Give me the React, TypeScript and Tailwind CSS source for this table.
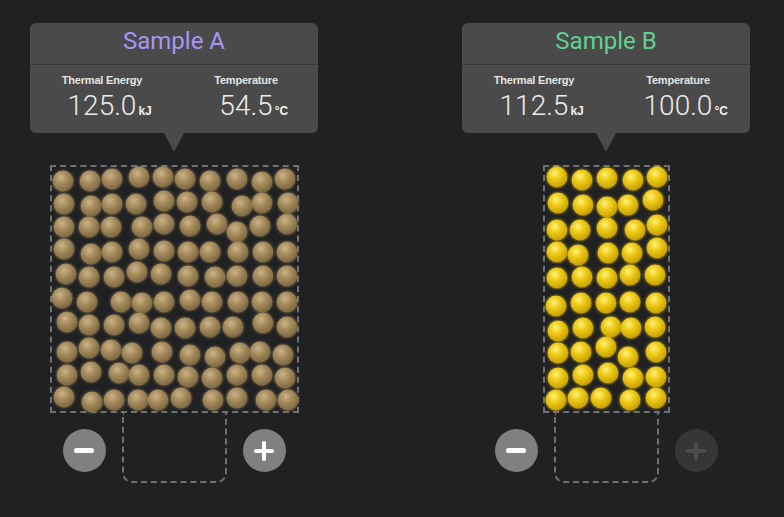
import React from "react";

type P = [number, number];

const brown: P[] = [
  [62,181],[89,181],[111,179],[138,177],[162,177],[184,179],[209,181],[236,179],[261,182],[284,179],
  [63,204],[90,206],[111,204],[135,204],[163,201],[186,202],[211,202],[241,206],[261,203],[287,203],
  [63,227],[88,227],[110,227],[141,227],[163,224],[189,226],[216,224],[236,232],[259,226],[286,224],
  [63,249],[90,254],[111,252],[138,249],[163,251],[187,252],[209,252],[237,252],[262,252],[286,252],
  [65,274],[88,277],[113,277],[136,272],[160,274],[187,276],[214,277],[236,276],[262,276],[286,276],
  [61,298],[86,302],[120,302],[141,303],[163,302],[189,300],[211,302],[237,302],[261,302],[286,302],
  [66,322],[88,325],[113,325],[138,323],[160,328],[184,328],[209,327],[232,327],[262,323],[286,327],
  [66,352],[88,348],[110,350],[131,353],[161,352],[189,355],[214,357],[239,353],[259,352],[282,355],
  [66,375],[90,372],[118,373],[138,375],[163,375],[187,377],[211,378],[236,375],[261,375],[284,378],
  [63,397],[91,402],[113,400],[137,400],[157,400],[180,398],[212,400],[236,398],[265,400],[287,400],
];

const yellow: P[] = [
  [557,177],[582,180],[607,178],[633,180],[657,177],
  [558,203],[583,205],[607,207],[628,205],[653,200],
  [557,230],[580,230],[607,228],[635,230],[657,225],
  [557,252],[578,255],[608,253],[632,253],[657,248],
  [557,278],[582,277],[607,278],[630,275],[655,275],
  [556,306],[581,303],[606,303],[630,302],[656,303],
  [558,331],[583,328],[611,327],[631,328],[655,327],
  [558,353],[581,352],[606,347],[628,357],[656,352],
  [558,378],[583,375],[608,373],[633,378],[656,377],
  [556,400],[578,398],[601,398],[630,400],[656,398],
];

function Particles({
  pts, ox, oy, w, h, kind,
}: { pts: P[]; ox: number; oy: number; w: number; h: number; kind: "brown" | "yellow" }) {
  const id = `grad-${kind}`;
  const halo = kind === "brown" ? "#9a8458" : "#e0bc10";
  return (
    <svg width={w} height={h} className="block overflow-visible">
      <defs>
        {kind === "brown" ? (
          <radialGradient id={id} cx="40%" cy="33%" r="68%">
            <stop offset="0%" stopColor="#cbb389" />
            <stop offset="45%" stopColor="#a68c5d" />
            <stop offset="100%" stopColor="#7d6742" />
          </radialGradient>
        ) : (
          <radialGradient id={id} cx="40%" cy="33%" r="68%">
            <stop offset="0%" stopColor="#fff27e" />
            <stop offset="40%" stopColor="#f0cd1c" />
            <stop offset="100%" stopColor="#c69f00" />
          </radialGradient>
        )}
        <filter id={`soft-${kind}`} x="-20%" y="-20%" width="140%" height="140%">
          <feGaussianBlur stdDeviation="1.2" />
        </filter>
      </defs>
      {pts.map(([x, y], i) => (
        <circle key={`h${i}`} cx={x - ox} cy={y - oy} r={11.2} fill={halo} opacity={0.45} filter={`url(#soft-${kind})`} />
      ))}
      {pts.map(([x, y], i) => (
        <circle key={i} cx={x - ox} cy={y - oy} r={10.4} fill={`url(#${id})`} />
      ))}
    </svg>
  );
}

function MinusBtn() {
  return (
    <div className="w-[43px] h-[43px] rounded-full bg-[#808080] flex items-center justify-center mt-[16px]">
      <div className="w-[20px] h-[5px] rounded-full bg-white" />
    </div>
  );
}

function PlusBtn({ disabled }: { disabled?: boolean }) {
  const bar = disabled ? "bg-[#4a4b4d]" : "bg-white";
  return (
    <div
      className={`w-[43px] h-[43px] rounded-full flex items-center justify-center mt-[16px] relative ${
        disabled ? "bg-[#353638]" : "bg-[#808080]"
      }`}
    >
      <div className={`absolute w-[20px] h-[4px] rounded-full ${bar}`} />
      <div className={`absolute w-[4px] h-[20px] rounded-full ${bar}`} />
    </div>
  );
}

function Stat({ label, value, unit }: { label: string; value: string; unit: string }) {
  return (
    <div className="flex flex-col items-center">
      <div className="text-[11px] leading-[13px] font-bold text-[#e4e4e4] tracking-[-0.2px] font-['Liberation_Sans',sans-serif]">
        {label}
      </div>
      <div className="mt-[3px] relative inline-block text-[28px] leading-[32px] font-light text-[#ececec] font-['Roboto',sans-serif]">
        {value}
        <span className="absolute left-full top-[15px] ml-[2px] text-[12px] leading-[12px] font-bold text-[#f2f2f2] font-['Liberation_Sans',sans-serif]">
          {unit}
        </span>
      </div>
    </div>
  );
}

function Column({
  title, titleColor, energy, temp, boxW, pts, ox, plusDisabled, kind,
}: {
  title: string; titleColor: string; energy: string; temp: string; boxW: string;
  pts: P[]; ox: number; plusDisabled?: boolean; kind: "brown" | "yellow";
}) {
  const innerW = kind === "brown" ? 245 : 123;
  return (
    <div className="w-[288px] flex flex-col items-center">
      <div className="w-full h-[110px] rounded-[6px] bg-[#4a4a4a]">
        <div className="h-[42px] border-b border-[#373737] flex justify-center pt-[4px]">
          <div className={`text-[24px] leading-[28px] font-normal font-['Roboto',sans-serif] ${titleColor}`}>{title}</div>
        </div>
        <div className="grid grid-cols-2 pt-[9px]">
          <Stat label="Thermal Energy" value={energy} unit="kJ" />
          <Stat label="Temperature" value={temp} unit="°C" />
        </div>
      </div>
      <div className="w-0 h-0 border-l-[10px] border-r-[10px] border-t-[19px] border-l-transparent border-r-transparent border-t-[#4a4a4a]" />
      <div className={`mt-[13px] ${boxW} h-[248px] border-2 border-dashed border-[#717171]`}>
        <Particles pts={pts} ox={ox} oy={167} w={innerW} h={244} kind={kind} />
      </div>
      <div className="flex items-start gap-[16px]">
        <MinusBtn />
        <div className="w-[105px] h-[70px] border-2 border-t-0 border-dashed border-[#717171] rounded-b-[10px]" />
        <PlusBtn disabled={plusDisabled} />
      </div>
    </div>
  );
}

export default function App() {
  return (
    <div className="w-[784px] h-[517px] bg-[#202123] flex pt-[23px] pl-[30px] gap-[144px] overflow-hidden">
      <Column
        title="Sample A"
        titleColor="text-[#a896f2]"
        energy="125.0"
        temp="54.5"
        boxW="w-[249px]"
        pts={brown}
        ox={51}
        kind="brown"
      />
      <Column
        title="Sample B"
        titleColor="text-[#5fd28f]"
        energy="112.5"
        temp="100.0"
        boxW="w-[127px]"
        pts={yellow}
        ox={545}
        plusDisabled
        kind="yellow"
      />
    </div>
  );
}
